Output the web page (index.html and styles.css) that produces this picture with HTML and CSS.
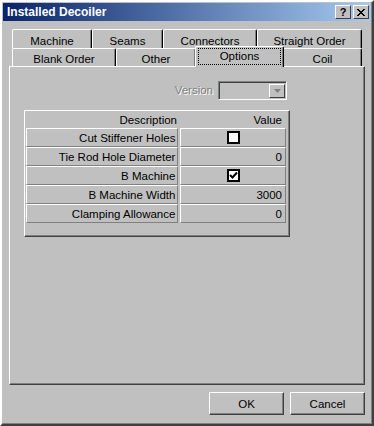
FILE: index.html
```html
<!DOCTYPE html>
<html lang="en">
<head>
    <meta charset="UTF-8">
    <title>Installed Decoiler</title>
    <link rel="stylesheet" href="styles.css">
</head>
<body>
    <div class="window">
        <div class="titlebar">
            <span class="title">Installed Decoiler</span>
            <div class="title-buttons">
                <span class="cap-button">?</span>
                <span class="cap-button close">
                    <svg width="8" height="7" viewBox="0 0 8 7"><path d="M0 0 L7 7 M1 0 L8 7 M7 0 L0 7 M8 0 L1 7" stroke="#000" stroke-width="1" fill="none"/></svg>
                </span>
            </div>
        </div>

        <div class="tabs">
            <div class="tab-row back">
                <div class="tab w80">Machine</div>
                <div class="tab w71">Seams</div>
                <div class="tab w94">Connectors</div>
                <div class="tab w105">Straight Order</div>
            </div>
            <div class="tab-row front">
                <div class="tab w104">Blank Order</div>
                <div class="tab w80">Other</div>
                <div class="tab w87 selected"><span class="focus">Options</span></div>
                <div class="tab w79">Coil</div>
            </div>
        </div>

        <div class="panel">
            <div class="options">
                <div class="version-row">
                    <span class="disabled-label">Version</span>
                    <div class="combo">
                        <div class="combo-button">
                            <svg width="7" height="4" viewBox="0 0 7 4"><path d="M0 0 H7 L3.5 4 Z" fill="#808080"/></svg>
                        </div>
                    </div>
                </div>

                <div class="grid">
                    <div class="grid-head">
                        <span class="head-desc">Description</span>
                        <span class="head-value">Value</span>
                    </div>
                    <div class="grid-row">
                        <div class="cell label">Cut Stiffener Holes</div>
                        <div class="cell value center"><span class="checkbox"></span></div>
                    </div>
                    <div class="grid-row">
                        <div class="cell label">Tie Rod Hole Diameter</div>
                        <div class="cell value">0</div>
                    </div>
                    <div class="grid-row">
                        <div class="cell label">B Machine</div>
                        <div class="cell value center">
                            <span class="checkbox">
                                <svg width="9" height="9" viewBox="0 0 9 9"><path d="M1 4 L3.5 6.5 L8 1.5" stroke="#000" stroke-width="2" fill="none"/></svg>
                            </span>
                        </div>
                    </div>
                    <div class="grid-row">
                        <div class="cell label">B Machine Width</div>
                        <div class="cell value">3000</div>
                    </div>
                    <div class="grid-row">
                        <div class="cell label">Clamping Allowance</div>
                        <div class="cell value">0</div>
                    </div>
                </div>
            </div>
        </div>

        <div class="button-row">
            <button class="push">OK</button>
            <button class="push">Cancel</button>
        </div>
    </div>
</body>
</html>
```

FILE: styles.css
```css
body {
    margin: 0;
    background-color: #c0c0c0;
    font-family: 'Liberation Sans', Arial, sans-serif;
    font-size: 11px;
    color: black;
}
.window {
    width: 374px;
    height: 426px;
    box-sizing: border-box;
    background-color: #c0c0c0;
    border-top: 2px solid #ffffff;
    border-left: 2px solid #ffffff;
    border-right: 2px solid #404040;
    border-bottom: 2px solid #404040;
    box-shadow: inset -1px -1px #808080;
    padding: 1px;
    display: flex;
    flex-direction: column;
}
.titlebar {
    height: 18px;
    background: linear-gradient(to right, #0a246a, #a6caf0);
    display: flex;
    align-items: center;
    justify-content: space-between;
    padding: 0 2px 0 4px;
}
.title {
    color: white;
    font-weight: bold;
    font-size: 12px;
}
.title-buttons {
    display: flex;
    gap: 2px;
}
.cap-button {
    width: 16px;
    height: 14px;
    box-sizing: border-box;
    background-color: #c0c0c0;
    border-top: 1px solid #ffffff;
    border-left: 1px solid #ffffff;
    border-right: 1px solid #404040;
    border-bottom: 1px solid #404040;
    display: flex;
    align-items: center;
    justify-content: center;
    font-weight: bold;
    font-size: 11px;
    line-height: 12px;
}

/* tabs */
.tabs {
    margin: 8px 0 0 9px;
    display: flex;
    flex-direction: column;
}
.tab-row {
    display: flex;
}
.tab-row.back {
    height: 19px;
}
.tab-row.front {
    height: 18px;
}
.tab {
    box-sizing: border-box;
    border-top: 1px solid #ffffff;
    border-left: 1px solid #ffffff;
    border-right: 1px solid #000000;
    box-shadow: inset -1px 0 #808080;
    border-radius: 2px 2px 0 0;
    display: flex;
    align-items: center;
    justify-content: center;
    background-color: #c0c0c0;
    font-size: 11.5px;
    padding-top: 3px;
}
.w71 { width: 71px; }
.w79 { width: 79px; }
.w80 { width: 80px; }
.w87 { width: 87px; }
.w94 { width: 94px; }
.w104 { width: 104px; }
.w105 { width: 105px; }
.tab.selected {
    margin: -2px -1px -1px -1px;
    width: 89px;
    height: 21px;
    z-index: 1;
    align-items: flex-start;
    padding-top: 2px;
}
.focus {
    outline: 1px dotted #000;
    outline-offset: 0;
    width: 81px;
    text-align: center;
    line-height: 15px;
}

/* page panel */
.panel {
    margin-left: 6px;
    width: 356px;
    height: 319px;
    box-sizing: border-box;
    border-top: 1px solid #ffffff;
    border-left: 1px solid #ffffff;
    border-right: 1px solid #404040;
    border-bottom: 1px solid #404040;
    box-shadow: inset -1px -1px #808080;
}
.options {
    margin: 13px 0 0 14px;
    width: 266px;
}
.version-row {
    display: flex;
    justify-content: flex-end;
    align-items: center;
    gap: 5px;
    padding-right: 3px;
    height: 20px;
}
.disabled-label {
    color: #808080;
    text-shadow: 1px 1px #ffffff;
    font-size: 11.5px;
}
.combo {
    width: 69px;
    height: 19px;
    box-sizing: border-box;
    border-top: 1px solid #808080;
    border-left: 1px solid #808080;
    border-right: 1px solid #ffffff;
    border-bottom: 1px solid #ffffff;
    box-shadow: inset 1px 1px #404040;
    display: flex;
    justify-content: flex-end;
    padding: 2px 1px 1px 2px;
}
.combo-button {
    width: 16px;
    box-sizing: border-box;
    border-top: 1px solid #ffffff;
    border-left: 1px solid #ffffff;
    border-right: 1px solid #404040;
    border-bottom: 1px solid #404040;
    display: flex;
    align-items: center;
    justify-content: center;
}

/* property grid */
.grid {
    margin-top: 10px;
    height: 127px;
    box-sizing: border-box;
    border-top: 1px solid #ffffff;
    border-left: 1px solid #ffffff;
    border-right: 1px solid #404040;
    border-bottom: 1px solid #404040;
    box-shadow: inset -1px -1px #808080;
    padding: 1px 3px 0 1px;
}
.grid-head {
    display: flex;
    height: 16px;
    align-items: center;
    font-size: 11.5px;
}
.head-desc {
    width: 151px;
    text-align: right;
}
.head-value {
    flex: 1;
    text-align: right;
    padding-right: 4px;
}
.grid-row {
    display: flex;
    gap: 2px;
    height: 19px;
}
.cell {
    box-sizing: border-box;
    border-top: 1px solid #ffffff;
    border-left: 1px solid #ffffff;
    border-right: 1px solid #808080;
    border-bottom: 1px solid #808080;
    display: flex;
    align-items: center;
    justify-content: flex-end;
    padding-right: 2px;
    font-size: 11.5px;
}
.label {
    width: 153px;
}
.value {
    width: 106px;
    padding-right: 3px;
}
.value.center {
    justify-content: center;
    padding-right: 0;
}
.checkbox {
    width: 13px;
    height: 13px;
    box-sizing: border-box;
    border: 2px solid #000;
    background-color: #fff;
    display: flex;
    align-items: center;
    justify-content: center;
}

/* dialog buttons */
.button-row {
    display: flex;
    justify-content: flex-end;
    gap: 6px;
    margin: 7px 6px 0 0;
}
.push {
    width: 75px;
    height: 23px;
    box-sizing: border-box;
    background-color: #c0c0c0;
    border-top: 1px solid #ffffff;
    border-left: 1px solid #ffffff;
    border-right: 1px solid #404040;
    border-bottom: 1px solid #404040;
    box-shadow: inset -1px -1px #808080;
    font-family: 'Liberation Sans', Arial, sans-serif;
    font-size: 11.5px;
    padding: 0;
}
```
